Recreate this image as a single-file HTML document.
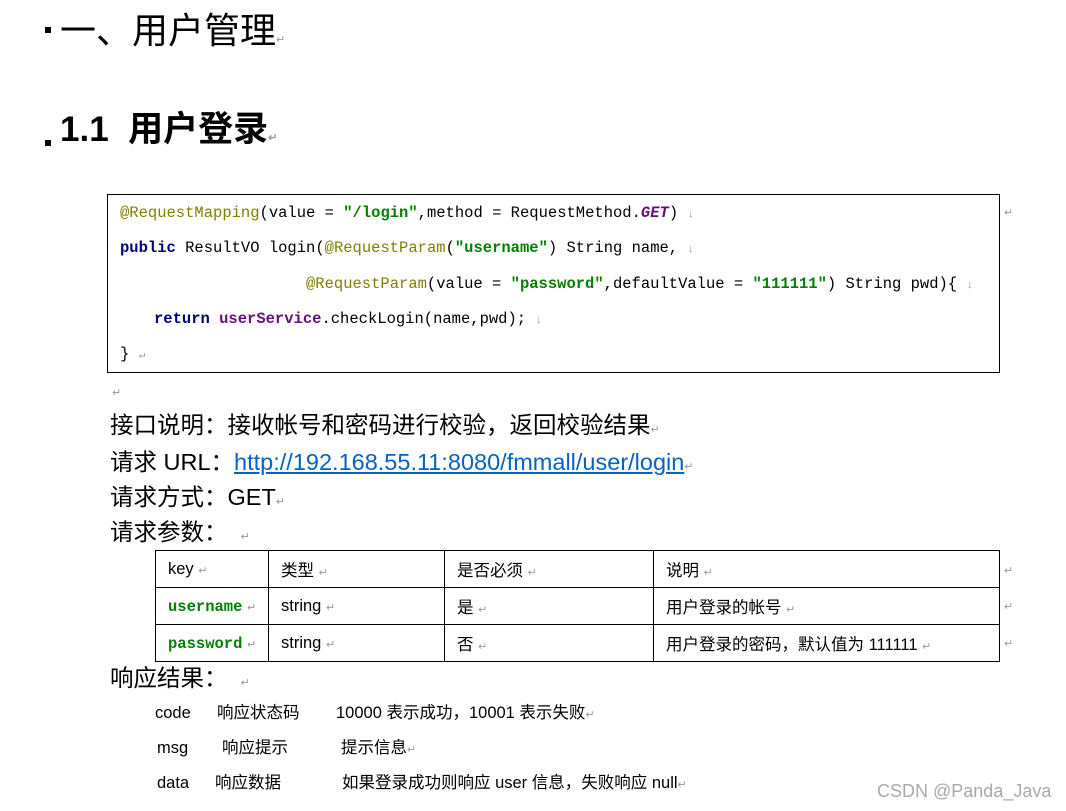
<!DOCTYPE html><html><head><meta charset="utf-8"><style>
body{margin:0;width:1066px;height:811px;background:#fff;position:relative;overflow:hidden;font-family:"Liberation Sans","Noto Sans CJK SC",sans-serif;color:#000}
.a{position:absolute;white-space:pre;line-height:1}
.m{font-family:"Liberation Mono","DejaVu Sans Mono",monospace;font-size:15.5px}
.ann{color:#808000}.str{color:#008000;font-weight:bold}.kw{color:#000080;font-weight:bold}.pu{color:#660e7a;font-weight:bold}
.p{color:#999;font-size:11px}
table{position:absolute;left:155px;top:550px;border-collapse:collapse;font-size:16.5px}
td{border:1px solid #000;height:36px;padding:0 0 0 12px;vertical-align:middle}
.r{font-size:16.5px}
.t{font-size:23.5px}
</style></head><body>
<div class="a" style="left:45px;top:27px;width:6px;height:6px;background:#000"></div>
<div class="a" style="left:60px;top:13px;font-size:36px">一、用户管理<span class="p">↵</span></div>
<div class="a" style="left:45px;top:140px;width:6px;height:6px;background:#000"></div>
<div class="a" style="left:60px;top:112px;font-size:35px;font-weight:bold">1.1  用户登录<span class="p">↵</span></div>
<div class="a" style="left:107px;top:194px;width:891px;height:177px;border:1px solid #000"></div>
<div class="a m" style="left:120px;top:206px"><span class="ann">@RequestMapping</span>(value = <span class="str">"/login"</span>,method = RequestMethod.<span class="pu"><i>GET</i></span>) <span class="p">↓</span></div>
<div class="a m" style="left:120px;top:241px"><span class="kw">public</span> ResultVO login(<span class="ann">@RequestParam</span>(<span class="str">"username"</span>) String name, <span class="p">↓</span></div>
<div class="a m" style="left:306px;top:277px"><span class="ann">@RequestParam</span>(value = <span class="str">"password"</span>,defaultValue = <span class="str">"111111"</span>) String pwd){ <span class="p">↓</span></div>
<div class="a m" style="left:154px;top:312px"><span class="kw">return</span> <span class="pu">userService</span>.checkLogin(name,pwd); <span class="p">↓</span></div>
<div class="a m" style="left:120px;top:347px">} <span class="p">↵</span></div>
<div class="a p" style="left:1004px;top:208px">↵</div>
<div class="a p" style="left:112px;top:388px">↵</div>
<div class="a t" style="left:110px;top:414px">接口说明：接收帐号和密码进行校验，返回校验结果<span class="p">↵</span></div>
<div class="a t" style="left:110px;top:451px">请求 URL：<span style="color:#0563c1;text-decoration:underline">http://192.168.55.11:8080/fmmall/user/login</span><span class="p">↵</span></div>
<div class="a t" style="left:110px;top:486px">请求方式：GET<span class="p">↵</span></div>
<div class="a t" style="left:110px;top:521px">请求参数：  <span class="p">↵</span></div>
<table><tr><td style="width:100px">key <span class="p">↵</span></td><td style="width:163px">类型 <span class="p">↵</span></td><td style="width:196px">是否必须 <span class="p">↵</span></td><td style="width:333px">说明 <span class="p">↵</span></td></tr>
<tr><td><span class="m str">username</span> <span class="p">↵</span></td><td>string <span class="p">↵</span></td><td>是 <span class="p">↵</span></td><td>用户登录的帐号 <span class="p">↵</span></td></tr>
<tr><td><span class="m str">password</span> <span class="p">↵</span></td><td>string <span class="p">↵</span></td><td>否 <span class="p">↵</span></td><td>用户登录的密码，默认值为 111111 <span class="p">↵</span></td></tr></table>
<div class="a p" style="left:1004px;top:566px">↵</div><div class="a p" style="left:1004px;top:602px">↵</div><div class="a p" style="left:1004px;top:639px">↵</div>
<div class="a t" style="left:110px;top:667px">响应结果：  <span class="p">↵</span></div>
<div class="a r" style="left:155px;top:705px">code</div><div class="a r" style="left:217px;top:705px">响应状态码</div><div class="a r" style="left:336px;top:705px">10000 表示成功，10001 表示失败<span class="p">↵</span></div>
<div class="a r" style="left:157px;top:740px">msg</div><div class="a r" style="left:222px;top:740px">响应提示</div><div class="a r" style="left:341px;top:740px">提示信息<span class="p">↵</span></div>
<div class="a r" style="left:157px;top:775px">data</div><div class="a r" style="left:215px;top:775px">响应数据</div><div class="a r" style="left:342px;top:775px">如果登录成功则响应 user 信息，失败响应 null<span class="p">↵</span></div>
<div class="a" style="left:877px;top:782px;font-size:18px;color:#aaa">CSDN @Panda_Java</div>
</body></html>
